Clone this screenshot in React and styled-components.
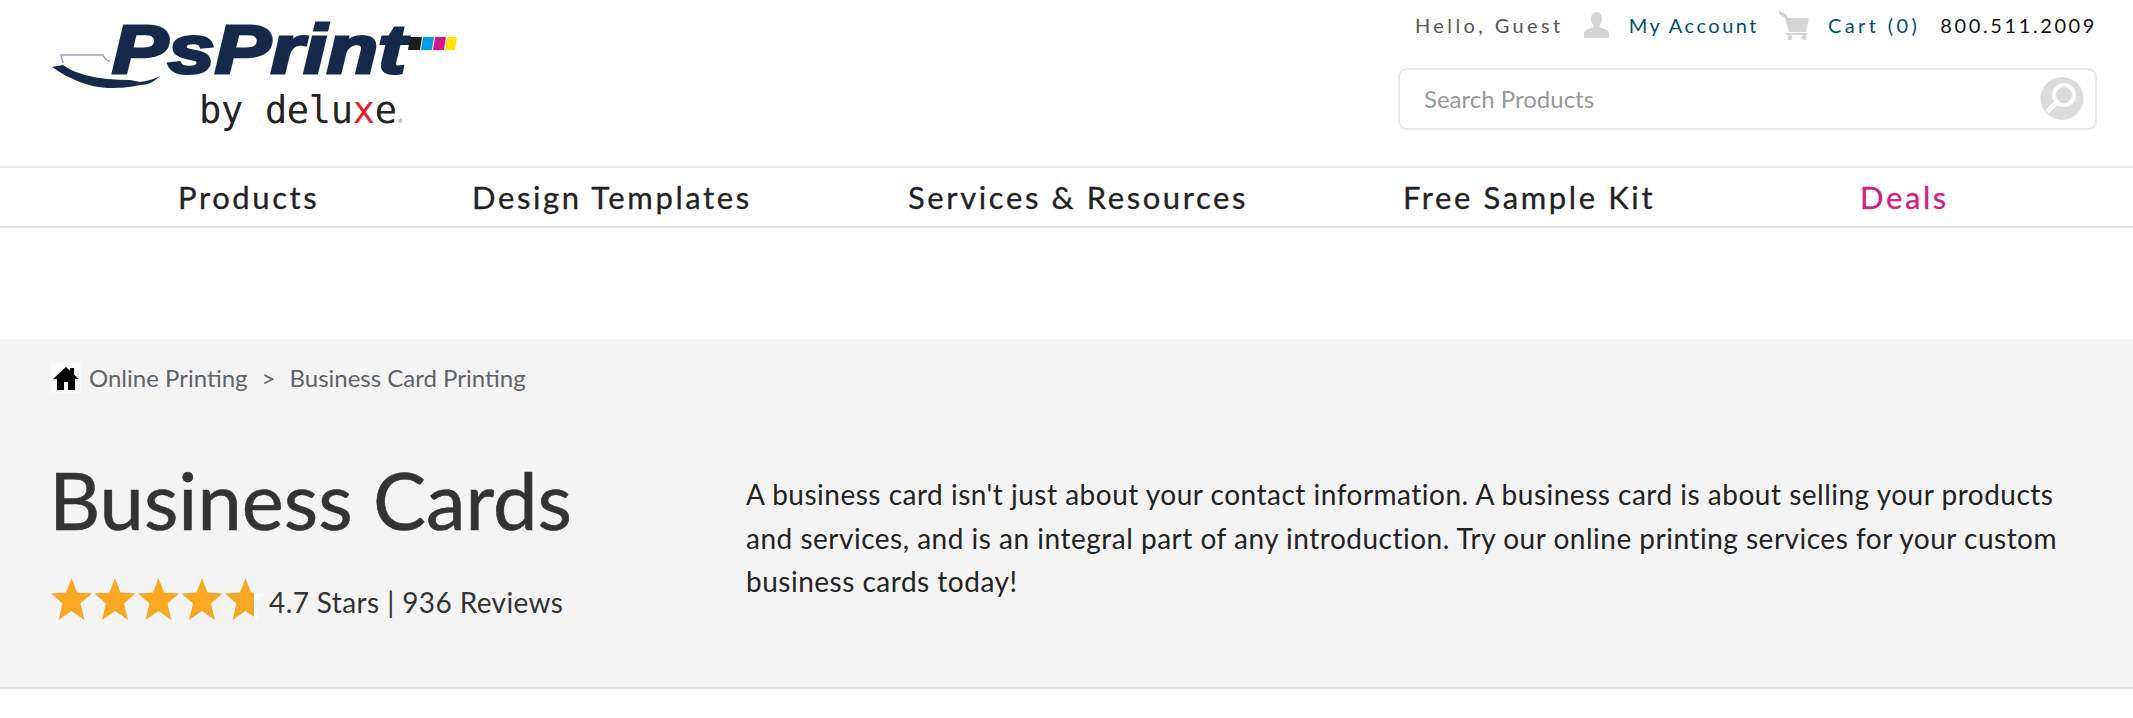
import styled, { createGlobalStyle } from 'styled-components';

const GlobalStyle = createGlobalStyle`
  html, body {
    margin: 0;
    padding: 0;
    background: #fff;
    font-family: 'Lato', 'Noto Sans', sans-serif;
  }
`;

const Page = styled.div`
  width: 2133px;
  height: 718px;
  overflow: hidden;
`;

const Header = styled.header`
  display: flex;
  justify-content: space-between;
  height: 166px;
  box-sizing: border-box;
  padding: 9px 36px 0 50px;
`;

const Logo = styled.svg`
  display: block;
  width: 412px;
  height: 130px;
  margin-top: 1px;
`;

const HeaderRight = styled.div`
  display: flex;
  flex-direction: column;
  align-items: flex-end;
`;

const Utility = styled.div`
  display: flex;
  align-items: center;
  height: 32px;
  font-size: 20px;
`;

const UtilityText = styled.span`
  color: ${(p) => p.$color};
  margin-left: ${(p) => p.$left}px;
  letter-spacing: ${(p) => p.$spacing}px;
`;

const UtilityIcon = styled.svg`
  display: block;
  margin-left: ${(p) => p.$left}px;
`;

const SearchBox = styled.div`
  display: flex;
  align-items: center;
  justify-content: space-between;
  box-sizing: border-box;
  width: 699px;
  height: 62px;
  margin-top: 27px;
  padding: 0 11px 2px 24px;
  border: 2px solid #e8e8e8;
  border-radius: 9px;
  color: #999;
  font-size: 24px;
`;

const Nav = styled.nav`
  display: grid;
  grid-template-columns: 294px 436px 495px 457px auto;
  align-items: center;
  height: 62px;
  box-sizing: border-box;
  padding-left: 178px;
  border-top: 2px solid #e8e8e8;
  border-bottom: 2px solid #e4e4e4;
`;

const NavItem = styled.a`
  color: ${(p) => (p.$deal ? '#cf2185' : '#222')};
  font-size: 31px;
  letter-spacing: 2.6px;
  -webkit-text-stroke: 0.3px currentColor;
`;

const Spacer = styled.div`
  height: 111px;
`;

const Hero = styled.section`
  box-sizing: border-box;
  height: 350px;
  padding: 23px 0 0 51px;
  background: #f4f4f4;
  border-bottom: 2px solid #e2e2e2;
`;

const Breadcrumb = styled.div`
  display: flex;
  align-items: center;
  height: 31px;
  color: #5f6368;
  font-size: 24px;
`;

const HomeTile = styled.span`
  display: flex;
  margin-right: 8px;
  background: #fafafa;
`;

const Separator = styled.span`
  margin: 0 14px;
`;

const HeroRow = styled.div`
  display: flex;
  margin-top: 57px;
`;

const TitleColumn = styled.div`
  width: 695px;
  flex: none;
`;

const Title = styled.h1`
  margin: 0 0 0 -2px;
  color: #333;
  font-size: 79.5px;
  font-weight: 400;
  line-height: 100px;
  -webkit-text-stroke: 0.6px currentColor;
`;

const Rating = styled.div`
  display: flex;
  align-items: center;
  margin-top: 28px;
  color: #333;
  font-size: 28px;
  letter-spacing: 0.4px;
`;

const RatingText = styled.span`
  margin-top: 4px;
`;

const Stars = styled.svg`
  display: block;
  margin-right: 3px;
`;

const Intro = styled.p`
  width: 1330px;
  margin: 23px 0 0;
  color: #222;
  font-size: 28px;
  line-height: 43.5px;
  letter-spacing: 0.5px;
`;

const STAR = '20.500,0 26,14.500 41,15.500 29.500,25.500 33.500,42 20.500,33 7.500,42 11.500,25.500 0,15.500 15,14.500';

export default function App() {
  return (
    <Page>
      <GlobalStyle />
      <Header>
        <Logo viewBox="0 0 412 130">
          <path d="M2 57 L13 55 C20 60 28 63 35 65 C50 69 65 70 80 70 L90 72 C98 71 105 69 110 66 C104 72 98 75 90 75 C78 78 66 78 57 78 C40 77 20 70 2 57Z" fill="#16294a" />
          <path d="M13 53 L11 45 L53 45 C55 49 57 51 60 51" fill="none" stroke="#98a2b4" strokeWidth="1.5" />
          <text x="62" y="63" fontFamily="'Liberation Sans'" fontSize="69" fontWeight="700" fontStyle="italic" fill="#16294a" stroke="#16294a" strokeWidth="3" textLength="294" lengthAdjust="spacingAndGlyphs">PsPrint</text>
          <polygon points="358,40 360,27 372,27 370,40" fill="#1d1d1b" />
          <polygon points="371,40 373,27 384,27 382,40" fill="#00a0e0" />
          <polygon points="383,40 385,27 396,27 394,40" fill="#d6168b" />
          <polygon points="395,40 397,27 407,27 405,40" fill="#ffe600" />
          <text x="149" y="113" fontFamily="'DejaVu Sans Mono'" fontSize="37" fill="#222" textLength="198">
            by delu<tspan fill="#e3202c">x</tspan>e
          </text>
          <text x="348" y="113" fontFamily="'Liberation Sans'" fontSize="6" fill="#555">®</text>
        </Logo>
        <HeaderRight>
          <Utility>
            <UtilityText $color="#555" $spacing={3.4}>Hello, Guest</UtilityText>
            <UtilityIcon $left={20} width="25" height="26" viewBox="0 0 25 26">
              <path d="M12.500 0C8.500 0 7 3 7 7c0 3 1.200 5 2.500 6v2L2 18c-1.500.7-2 2-2 3.500V26h25v-4.500c0-1.500-.5-2.800-2-3.500l-7.500-3v-2c1.300-1 2.500-3 2.500-6 0-4-1.500-7-5.500-7z" fill="#d4d4d4" />
            </UtilityIcon>
            <UtilityText $color="#00506b" $left={20} $spacing={2.5}>My Account</UtilityText>
            <UtilityIcon $left={20} width="30" height="29" viewBox="0 0 30 29">
              <path d="M0 0l7 3 2 4h21l-3 14H10L6 7 0 3z" fill="#d4d4d4" />
              <rect x="7" y="22" width="21" height="2" fill="#d4d4d4" />
              <circle cx="11" cy="26.500" r="2.500" fill="#d4d4d4" />
              <circle cx="25" cy="26.500" r="2.500" fill="#d4d4d4" />
            </UtilityIcon>
            <UtilityText $color="#00506b" $left={19} $spacing={3.4}>Cart (0)</UtilityText>
            <UtilityText $color="#111" $left={20} $spacing={2.6}>800.511.2009</UtilityText>
          </Utility>
          <SearchBox>
            <span>Search Products</span>
            <svg width="44" height="43" viewBox="0 0 44 43">
              <circle cx="22" cy="21.500" r="21.500" fill="#dcdcdc" />
              <circle cx="24" cy="18" r="10" fill="none" stroke="#fff" strokeWidth="4" />
              <path d="M16 26L7 35" stroke="#fff" strokeWidth="5" />
            </svg>
          </SearchBox>
        </HeaderRight>
      </Header>
      <Nav>
        <NavItem>Products</NavItem>
        <NavItem>Design Templates</NavItem>
        <NavItem>Services &amp; Resources</NavItem>
        <NavItem>Free Sample Kit</NavItem>
        <NavItem $deal>Deals</NavItem>
      </Nav>
      <Spacer />
      <Hero>
        <Breadcrumb>
          <HomeTile>
            <svg width="30" height="30" viewBox="0 0 30 30">
              <path d="M15 4L2 16h4v11h7v-8h4v8h7V16h4l-5-4.600V5h-4v2.700z" fill="#000" />
            </svg>
          </HomeTile>
          Online Printing
          <Separator>&gt;</Separator>
          Business Card Printing
        </Breadcrumb>
        <HeroRow>
          <TitleColumn>
            <Title>Business Cards</Title>
            <Rating>
              <Stars width="215" height="43" viewBox="0 0 215 43">
                <defs>
                  <linearGradient id="partial">
                    <stop offset="70%" stopColor="#f8a824" />
                    <stop offset="70%" stopColor="#fafafa" />
                  </linearGradient>
                </defs>
                {[0, 1, 2, 3, 4].map((i) => (
                  <polygon
                    key={i}
                    points={STAR}
                    transform={`translate(${i * 43.5} 0)`}
                    fill={i === 4 ? 'url(#partial)' : '#f8a824'}
                  />
                ))}
              </Stars>
              <RatingText>4.7 Stars | 936 Reviews</RatingText>
            </Rating>
          </TitleColumn>
          <Intro>
            A business card isn't just about your contact information. A business card is about selling your products and services, and is an integral part of any introduction. Try our online printing services for your custom business cards today!
          </Intro>
        </HeroRow>
      </Hero>
    </Page>
  );
}
